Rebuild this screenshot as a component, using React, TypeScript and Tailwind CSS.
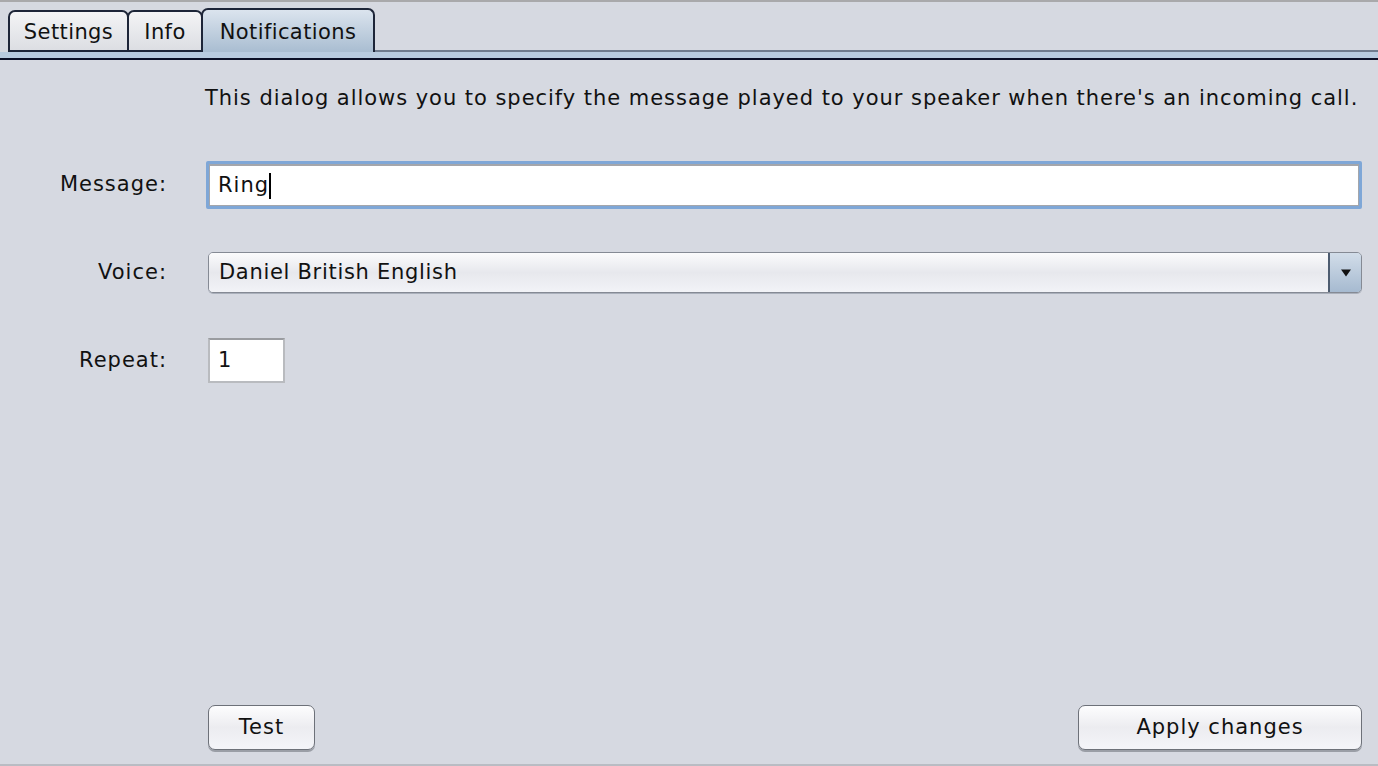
import React from "react";

const font = { fontFamily: '"DejaVu Sans", "Liberation Sans", sans-serif' };

const Tab: React.FC<{ title: string; width: string; active?: boolean }> = ({ title, width, active }) => (
  <div
    className={
      active
        ? `${width} h-[44px] pt-[4px] flex items-center justify-center rounded-t-[7px] border-2 border-b-0 border-[#1d2538] bg-gradient-to-b from-[#dbe4ee] to-[#a9bdd1] text-[21px] tracking-[0.4px] text-[#111]`
        : `${width} h-[42px] pt-[3px] flex items-center justify-center rounded-t-[7px] border-2 border-[#1d2538] bg-gradient-to-b from-[#f4f4f6] to-[#dcdee3] text-[21px] tracking-[0.4px] text-[#111]`
    }
  >
    {title}
  </div>
);

const Button: React.FC<{ title: string; width: string }> = ({ title, width }) => (
  <button
    className={`${width} h-[45px] rounded-[7px] border border-[#6d7179] bg-gradient-to-b from-[#fdfdfe] via-[#ececf0] to-[#f4f5f9] text-[21px] tracking-[1px] text-[#111] shadow-[0_2px_0_#9a9ea6]`}
    style={font}
  >
    {title}
  </button>
);

const App: React.FC = () => {
  return (
    <div className="w-[1378px] h-[766px] flex flex-col bg-[#d6d9e1] overflow-hidden" style={font}>
      <div className="h-[2px] bg-[#a9a9ab]" />
      <div className="flex items-end pl-[8px] pt-[6px]">
        <Tab title="Settings" width="w-[121px]" />
        <div className="-ml-[2px]">
          <Tab title="Info" width="w-[76px]" />
        </div>
        <div className="-ml-[2px]">
          <Tab title="Notifications" width="w-[174px]" active />
        </div>
        <div className="flex-1 h-[2px] bg-[#6f7b8d]" />
      </div>
      <div className="h-[6px] bg-[#b8cbdf]" />
      <div className="h-[2px] bg-[#0b1027]" />

      <div className="flex-1 flex flex-col pr-[16px] text-[21px] tracking-[1px] text-[#111]">
        <p className="mt-[25px] ml-[205px] leading-[26px] tracking-[0.96px] whitespace-nowrap">
          This dialog allows you to specify the message played to your speaker when there's an incoming call.
        </p>

        <div className="mt-[50px] flex items-center">
          <label className="w-[167px] text-right">Message:</label>
          <div className="ml-[39px] flex-1 h-[48px] rounded-[2px] border-[3px] border-[#7fa7d7] bg-white">
            <div className="h-full border border-[#a4a6ab] border-t-[2px] flex items-center pl-[8px]">
              <span>Ring</span>
              <span className="w-[2px] h-[26px] bg-black" />
            </div>
          </div>
        </div>

        <div className="mt-[43px] flex items-center">
          <label className="w-[167px] text-right">Voice:</label>
          <div className="ml-[41px] flex-1 h-[41px] rounded-[5px] border border-[#858a94] flex overflow-hidden shadow-[0_1px_0_#aab0bb]">
            <div className="flex-1 flex items-center pl-[10px] tracking-[0.7px] bg-gradient-to-b from-[#fbfbfc] via-[#e7e8ed] to-[#f2f3f7]">
              Daniel British English
            </div>
            <div className="w-[33px] border-l-2 border-[#4d5c70] bg-gradient-to-b from-[#d2dde9] to-[#a6bad0] flex items-center justify-center">
              <svg width="12" height="10" viewBox="0 0 12 10">
                <path d="M1 1.5 H11 L6 8.5 Z" fill="#111" />
              </svg>
            </div>
          </div>
        </div>

        <div className="mt-[45px] flex items-center">
          <label className="w-[167px] text-right">Repeat:</label>
          <div className="ml-[41px] w-[77px] h-[45px] border-2 border-[#b9bbbf] border-t-[#9a9ca0] bg-white flex items-center pl-[8px]">
            1
          </div>
        </div>

        <div className="mt-auto mb-[14px] flex justify-between items-center pl-[208px]">
          <Button title="Test" width="w-[107px]" />
          <Button title="Apply changes" width="w-[284px]" />
        </div>
      </div>
      <div className="h-[2px] bg-[#b9bcc3]" />
    </div>
  );
};

export default App;
